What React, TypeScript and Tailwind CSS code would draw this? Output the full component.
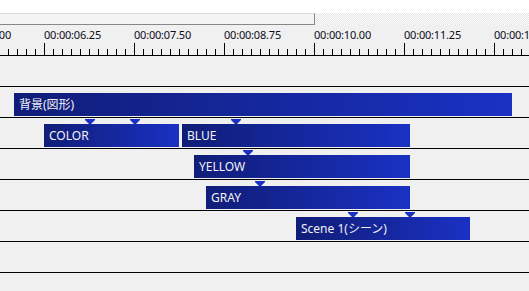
type Clip = { label: string; left: number; width: number };
type Row = { clips: Clip[]; markers: number[] };

const rows: Row[] = [
  { clips: [], markers: [] },
  { clips: [{ label: "背景(図形)", left: 14, width: 498 }], markers: [] },
  {
    clips: [
      { label: "COLOR", left: 44, width: 135 },
      { label: "BLUE", left: 182, width: 228 },
    ],
    markers: [90, 135, 236],
  },
  { clips: [{ label: "YELLOW", left: 194, width: 216 }], markers: [248] },
  { clips: [{ label: "GRAY", left: 206, width: 204 }], markers: [260] },
  { clips: [{ label: "Scene 1(シーン)", left: 296, width: 174 }], markers: [353, 410] },
  { clips: [], markers: [] },
  { clips: [], markers: [] },
];

const labels = ["00:00:05.00", "00:00:06.25", "00:00:07.50", "00:00:08.75", "00:00:10.00", "00:00:11.25", "00:00:12.50"];

function Ticks() {
  const ticks: { x: number; major: boolean }[] = [];
  for (let x = -1; x < 529; x += 9) {
    ticks.push({ x, major: (x - 44) % 90 === 0 });
  }
  return (
    <svg width="529" height="13" className="block">
      {ticks.map((t) => (
        <rect key={t.x} x={t.x} y={t.major ? 1 : 7} width="1" height={t.major ? 12 : 6} fill="#000" />
      ))}
    </svg>
  );
}

function Marker({ x }: { x: number }) {
  return (
    <svg width="10" height="5" className="absolute top-[1px]" style={{ left: x - 5 }}>
      <polygon points="0,0 10,0 10,1 6,5 4,5 0,1" fill="#1a30c4" />
    </svg>
  );
}

export default function App() {
  return (
    <div className="flex h-[291px] w-[529px] flex-col overflow-hidden bg-[#f0f0f0] font-['Noto_Sans','Noto_Sans_CJK_JP',sans-serif]">
      <div className="h-[13px] shrink-0 bg-white" />
      <div className="flex h-[12px] shrink-0">
        <div className="h-full w-[315px] border-t border-r border-b border-t-[#dcdcdc] border-r-[#888] border-b-[#888] bg-[#f4f4f4]" />
        <div className="h-full flex-1 bg-[repeating-conic-gradient(#e4e4e4_0_25%,#ffffff_0_50%)] bg-[length:2px_2px]" />
      </div>
      <div className="h-[30px] shrink-0 pt-[2px]">
        <div className="ml-[-46px] flex h-[15px] text-[11px] leading-[15px] tracking-[-0.2px] text-[#0c0c20]">
          {labels.map((l) => (
            <div key={l} className="w-[90px] shrink-0 whitespace-nowrap">
              {l}
            </div>
          ))}
        </div>
        <Ticks />
      </div>
      {rows.map((row, i) => (
        <div key={i} className="relative h-[31px] shrink-0 border-t border-black">
          {row.clips.map((c) => (
            <div
              key={c.label}
              className="absolute top-[6px] flex h-[23px] items-center bg-gradient-to-r from-[#101d78] to-[#1a31c4] pl-[5px] text-[12px] whitespace-nowrap text-[#f2f2f2]"
              style={{ left: c.left, width: c.width }}
            >
              <span className="pt-[1px]">{c.label}</span>
            </div>
          ))}
          {row.markers.map((m) => (
            <Marker key={m} x={m} />
          ))}
        </div>
      ))}
    </div>
  );
}
